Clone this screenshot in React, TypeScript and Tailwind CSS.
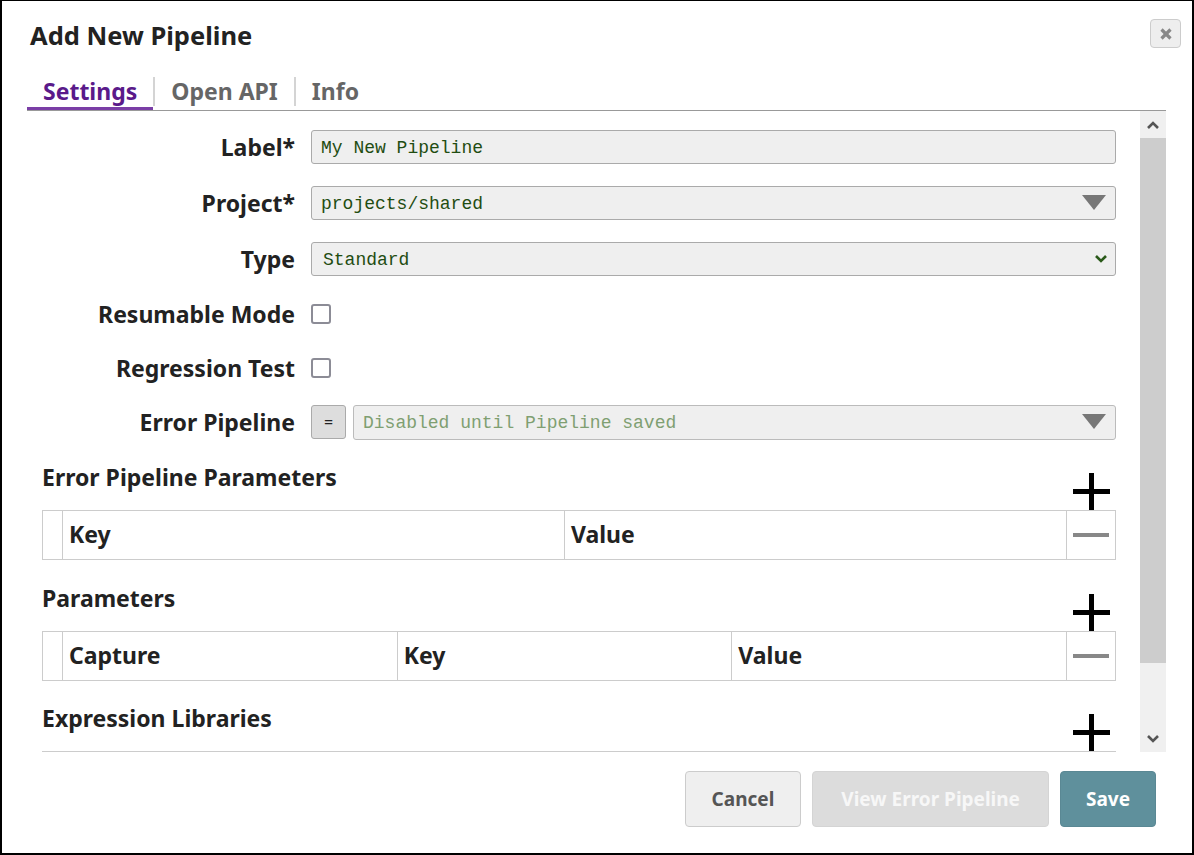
import React from 'react';

const sans = "font-['Noto_Sans','Open_Sans',sans-serif]";
const mono = "font-['Liberation_Mono','Courier_New',monospace]";

const Triangle = () => (
  <svg width="24" height="16" viewBox="0 0 24 16">
    <polygon points="0,0 24,0 12,15" fill="#777777" />
  </svg>
);

const SmallChevron = ({ color, up }: { color: string; up?: boolean }) => (
  <svg width="12" height="8" viewBox="0 0 12 8">
    <polyline
      points={up ? '1,7 6,2 11,7' : '1,1 6,6 11,1'}
      fill="none"
      stroke={color}
      strokeWidth="2.6"
    />
  </svg>
);

const Plus = () => (
  <svg width="37" height="37" viewBox="0 0 37 37">
    <rect x="16" y="0" width="5" height="37" fill="#000" />
    <rect x="0" y="16" width="37" height="5" fill="#000" />
  </svg>
);

const FormRow = ({ label, mt, children }: { label: string; mt: string; children: React.ReactNode }) => (
  <div className={`flex items-center h-[34px] ${mt}`}>
    <div className="w-[253px] shrink-0 text-right text-[23px] font-bold text-[#222] leading-none">{label}</div>
    <div className="ml-[16px] flex-1 flex items-center h-full">{children}</div>
  </div>
);

const Checkbox = () => (
  <div className="w-[20px] h-[20px] border-2 border-[#8c8c96] rounded-[3px] bg-white" />
);

// cols: header labels; an empty string gives an empty header cell
const Section = ({ title, cols, mt }: { title: string; cols: string[]; mt: string }) => (
  <div className={mt}>
    <div className="flex items-end justify-between">
      <div className="text-[23px] font-bold text-[#222] leading-[31px] pb-[17px]">{title}</div>
      <div className="mr-[6px]">
        <Plus />
      </div>
    </div>
    <div
      className={`grid h-[50px] border border-[#cccccc] ${
        cols.length === 3 ? 'grid-cols-[20px_1fr_1fr_1fr_48px]' : 'grid-cols-[20px_1fr_1fr_48px]'
      }`}
    >
      <div className="border-r border-[#cccccc]" />
      {cols.map((c, i) => (
        <div key={i} className="border-r border-[#cccccc] flex items-center pl-[6px] pb-[1px] text-[23px] font-bold text-[#222]">
          {c}
        </div>
      ))}
      <div className="flex items-center justify-center">
        <div className="w-[36px] h-[4px] bg-[#888888]" />
      </div>
    </div>
  </div>
);

export default function App() {
  return (
    <div className={`${sans} w-[1194px] h-[855px] bg-white border-t border-l-2 border-r-2 border-b-2 border-black flex flex-col overflow-hidden`}>
      {/* header */}
      <div className="h-[69px] flex items-start justify-between pl-[28px] pr-[11px] pt-[16px]">
        <h1 className="text-[25.5px] font-bold text-[#222] leading-[36px]">Add New Pipeline</h1>
        <button className="mt-[2px] w-[31px] h-[29px] bg-[#eeeeee] border border-[#cccccc] rounded-[4px] flex items-center justify-center">
          <svg width="12" height="12" viewBox="0 0 12 12">
            <line x1="1.5" y1="1.5" x2="10.5" y2="10.5" stroke="#888" strokeWidth="3.2" />
            <line x1="10.5" y1="1.5" x2="1.5" y2="10.5" stroke="#888" strokeWidth="3.2" />
          </svg>
        </button>
      </div>

      <div className="pl-[25px] pr-[26px] flex flex-col">
        {/* tabs */}
        <div className="h-[41px] flex items-start border-b border-[#999999]">
          <div className="px-[16px] pt-[6px] border-b-[3px] border-[#7a3ea6] text-[23px] font-bold text-[#5a1a8a] leading-[31px]">
            Settings
          </div>
          <div className="mt-[7px] w-[2px] h-[29px] bg-[#d4d4d4]" />
          <div className="px-[16px] pt-[6px] border-b-[3px] border-transparent text-[23px] font-bold text-[#666] leading-[31px]">
            Open API
          </div>
          <div className="mt-[7px] w-[2px] h-[29px] bg-[#d4d4d4]" />
          <div className="px-[16px] pt-[6px] border-b-[3px] border-transparent text-[23px] font-bold text-[#666] leading-[31px]">
            Info
          </div>
        </div>

        {/* content */}
        <div className="h-[641px] flex">
          <div className="flex-1 overflow-hidden pl-[15px] pr-[24px] pt-[19px]">
            <FormRow label="Label*" mt="">
              <div className={`${mono} w-full h-[34px] bg-[#efefef] border border-[#aaaaaa] rounded-[3px] flex items-center pl-[9px] pt-[2px] text-[18px] text-[#1f4d12]`}>
                My New Pipeline
              </div>
            </FormRow>
            <FormRow label="Project*" mt="mt-[22px]">
              <div className={`${mono} w-full h-[34px] bg-[#efefef] border border-[#aaaaaa] rounded-[3px] flex items-center justify-between pl-[9px] pr-[9px] text-[18px] text-[#1f4d12]`}>
                <span className="pt-[2px]">projects/shared</span>
                <Triangle />
              </div>
            </FormRow>
            <FormRow label="Type" mt="mt-[22px]">
              <div className={`${mono} w-full h-[34px] bg-[#efefef] border border-[#aaaaaa] rounded-[3px] flex items-center justify-between pl-[11px] pr-[8px] text-[18px] text-[#1f4d12]`}>
                <span className="pt-[2px]">Standard</span>
                <SmallChevron color="#2a5a1a" />
              </div>
            </FormRow>
            <FormRow label="Resumable Mode" mt="mt-[21px]">
              <Checkbox />
            </FormRow>
            <FormRow label="Regression Test" mt="mt-[20px]">
              <Checkbox />
            </FormRow>
            <FormRow label="Error Pipeline" mt="mt-[20px]">
              <div className="w-[35px] h-[34px] bg-[#dddddd] border border-[#aaaaaa] rounded-[3px] flex items-center justify-center text-[16px] text-[#222] shrink-0">
                =
              </div>
              <div className={`${mono} ml-[7px] flex-1 h-[35px] bg-[#efefef] border border-[#bbbbbb] rounded-[3px] flex items-center justify-between pl-[9px] pr-[9px] text-[18px] text-[#7f9f72]`}>
                <span className="pt-[2px]">Disabled until Pipeline saved</span>
                <Triangle />
              </div>
            </FormRow>

            <Section title="Error Pipeline Parameters" cols={['Key', 'Value']} mt="mt-[23px]" />
            <Section title="Parameters" cols={['Capture', 'Key', 'Value']} mt="mt-[23px]" />
            <Section title="Expression Libraries" cols={['', '']} mt="mt-[22px]" />
          </div>

          {/* scrollbar */}
          <div className="w-[26px] bg-[#f0f0f0] flex flex-col">
            <div className="h-[27px] flex items-center justify-center">
              <SmallChevron color="#555" up />
            </div>
            <div className="h-[525px] bg-[#cdcdcd]" />
            <div className="flex-1 flex items-end justify-center pb-[9px]">
              <SmallChevron color="#555" />
            </div>
          </div>
        </div>
      </div>

      {/* footer */}
      <div className="flex justify-end gap-[11px] pt-[19px] pr-[36px]">
        <button className="h-[56px] px-[26px] bg-[#efefef] border border-[#cccccc] rounded-[4px] text-[19px] font-bold text-[#555]">
          Cancel
        </button>
        <button className="h-[56px] px-[28px] bg-[#dcdcdc] border border-[#d4d4d4] rounded-[4px] text-[19px] font-bold text-[#f7f7f7]">
          View Error Pipeline
        </button>
        <button className="h-[56px] px-[25px] bg-[#5f909c] border border-[#5a8894] rounded-[4px] text-[19px] font-bold text-white">
          Save
        </button>
      </div>
    </div>
  );
}
